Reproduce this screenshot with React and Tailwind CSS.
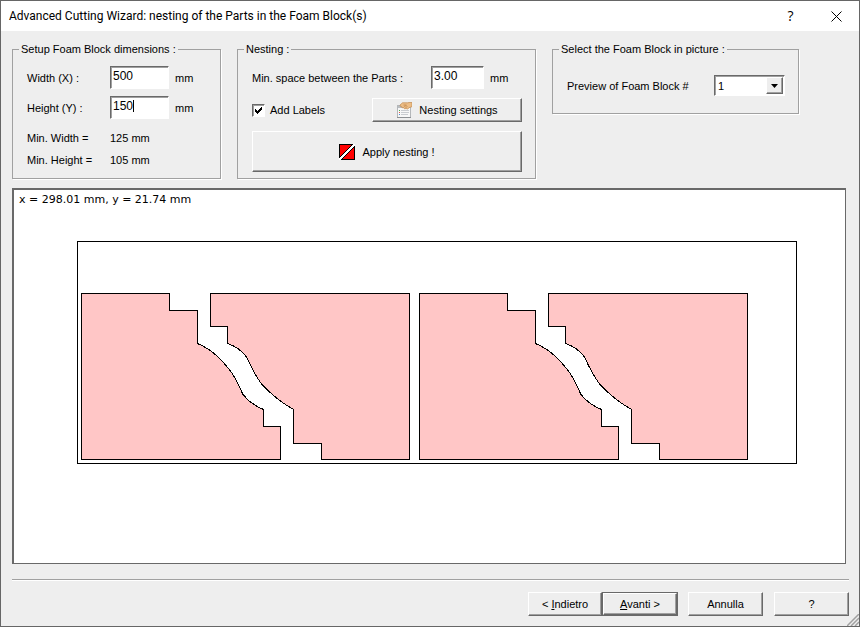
import React from "react";

const raised =
  "flex items-center justify-center border border-t-white border-l-white border-r-[#696969] border-b-[#696969] bg-[#eee] shadow-[inset_-1px_-1px_0_#a0a0a0]";
const sunken =
  "border border-t-[#696969] border-l-[#696969] border-r-white border-b-white bg-white shadow-[inset_1px_1px_0_#a0a0a0]";

function Group({ title, className, children }) {
  return (
    <fieldset
      className={
        "min-w-0 border border-[#a0a0a0] pr-[13px] pl-[14px] shadow-[1px_1px_0_#fff] " +
        className
      }
    >
      <legend className="-ml-2 bg-[#eee] px-[2px] leading-[14px]">{title}</legend>
      {children}
    </fieldset>
  );
}

function NumberField({ id, value, className, caret }) {
  return (
    <span className="relative flex">
      <input
        id={id}
        type="text"
        defaultValue={value}
        className={"h-[23px] px-[2px] pb-[3px] text-[12px] outline-none " + sunken + " " + className}
      />
      {caret && <span className="absolute top-1 left-[23px] h-3 w-px bg-black" />}
    </span>
  );
}

function SettingsIcon() {
  return (
    <svg width="16" height="16" viewBox="0 0 16 16" aria-hidden="true">
      <rect x="1.5" y="3.5" width="13" height="12" fill="#f7f7f7" stroke="#b4b7ba" />
      <path d="M2 4h12v2H2z" fill="#b9bdc1" />
      <path d="M1 15.5h14" stroke="#8e9194" />
      <path d="M3 8h1v1H3z" fill="#4caf50" />
      <path d="M3 10h1v1H3z" fill="#d9534f" />
      <path d="M3 12h1v1H3z" fill="#4a90d9" />
      <path d="M5 8.5h8M5 10.5h8M5 12.5h7" stroke="#c9ccd0" />
      <path
        d="M4 3 6.500 .8h5L13 .5h3v4.200l-2.500 .800-2 1.500-1.500-.5-1.500.4L7.500 5.500 6 5.800 5.600 4.600 4.300 4.300z"
        fill="#edbd85"
        stroke="#c08a50"
        strokeWidth="0.7"
      />
      <path d="M7.500 3h3M8 4.500l2.500-1M9.500 5.500l2-1" stroke="#b67a3e" strokeWidth="0.6" />
    </svg>
  );
}

function NestIcon() {
  return (
    <svg width="16" height="16" viewBox="0 0 16 16" aria-hidden="true" shapeRendering="crispEdges">
      <path d="M.5.5H14L.5 14zM15.500 15.500H2L15.500 2z" fill="#f00" stroke="#000" />
      <path d="M0 16 16 0" stroke="#fff" strokeWidth="2" />
    </svg>
  );
}

// one pair of parts, cut apart by the same wire path
function PartPair({ x }) {
  return (
    <g transform={`translate(${x} 0)`} fill="#ffc6c6" stroke="#000">
      <path d="M81.5 293.5H169.5V310.5H197.5V343.5C213 350 222 360 231.5 372.500C236 379 239 386 243 394.500C248 401 255 406 263.5 409.500V426.5H280.5V459.5H81.500Z" />
      <path d="M210.5 293.5H409.5V459.5H321.5V443.5H293.5V409.500C280 402 270 393 261.5 384C255 375 251 367 246.500 357C242 351 235 346 227.5 343.500V326.500H210.500Z" />
    </g>
  );
}

function App() {
  return (
    <div className="relative flex min-h-screen flex-col border border-[#666] bg-[#eee] font-['Liberation_Sans',sans-serif] text-[11px] leading-4 text-black">
      <header className="flex h-[30px] shrink-0 items-center bg-white pl-2">
        <h1 className="flex-1 font-['Roboto',sans-serif] text-[12px]">
          Advanced Cutting Wizard: nesting of the Parts in the Foam Block(s)
        </h1>
        <button className="h-full w-[45px] font-['Open_Sans',sans-serif] text-[14px]">
          ?
        </button>
        <button aria-label="Close" className="flex h-full w-[46px] items-center justify-center">
          <svg width="11" height="11" viewBox="0 0 11 11" aria-hidden="true">
            <path d="M.5.5l10 10M10.5.5l-10 10" stroke="#000" />
          </svg>
        </button>
      </header>

      <main className="flex flex-1 flex-col px-[11px] pt-[11px]">
        <div className="flex items-start gap-4">
          <Group title="Setup Foam Block dimensions :" className="w-[209px] pt-[10px] pb-[10px]">
            <div className="grid grid-cols-[83px_59px_1fr] items-center gap-y-[7px]">
              <label htmlFor="width">Width (X) :</label>
              <NumberField id="width" value="500" className="w-[59px]" />
              <span className="pl-[6px]">mm</span>
              <label htmlFor="height">Height (Y) :</label>
              <NumberField id="height" value="150" className="w-[59px]" caret />
              <span className="pl-[6px]">mm</span>
            </div>
            <dl className="mt-[11px] grid grid-cols-[83px_1fr] gap-y-[6px]">
              <dt>Min. Width =</dt>
              <dd>125 mm</dd>
              <dt>Min. Height =</dt>
              <dd>105 mm</dd>
            </dl>
          </Group>

          <Group title="Nesting :" className="w-[299px] pt-[10px] pb-[6px]">
            <div className="flex items-center">
              <label htmlFor="space" className="w-[179px]">
                Min. space between the Parts :
              </label>
              <NumberField id="space" value="3.00" className="w-[53px]" />
              <span className="pl-[6px]">mm</span>
            </div>
            <div className="mt-[9px] flex items-center justify-between">
              <label className="flex items-center gap-[5px]">
                <span className="grid">
                  <input
                    type="checkbox"
                    defaultChecked
                    className={"peer col-start-1 row-start-1 size-[13px] appearance-none " + sunken}
                  />
                  <svg
                    className="pointer-events-none invisible col-start-1 row-start-1 peer-checked:visible"
                    width="13"
                    height="13"
                    viewBox="0 0 13 13"
                    aria-hidden="true"
                  >
                    <path d="M3 5v3l2 2 5-5V2L5 7z" fill="#000" shapeRendering="crispEdges" />
                  </svg>
                </span>
                Add Labels
              </label>
              <button className={"h-6 w-[150px] gap-[7px] " + raised}>
                <SettingsIcon />
                Nesting settings
              </button>
            </div>
            <button className={"mt-[9px] h-[41px] w-full gap-[7px] " + raised}>
              <NestIcon />
              Apply nesting !
            </button>
          </Group>

          <Group title="Select the Foam Block in picture :" className="w-[247px] pt-[19px] pb-[17px]">
            <div className="flex items-center">
              <label htmlFor="block" className="w-[147px]">
                Preview of Foam Block #
              </label>
              <span className={"flex h-[21px] w-[71px] p-px " + sunken}>
                <select id="block" className="min-w-0 flex-1 appearance-none pl-[2px] outline-none">
                  <option>1</option>
                </select>
                <span className={"pointer-events-none w-[17px] " + raised}>
                  <svg width="7" height="4" viewBox="0 0 7 4" aria-hidden="true">
                    <path d="M0 0h7L3.5 4z" />
                  </svg>
                </span>
              </span>
            </div>
          </Group>
        </div>

        <section className="mt-[9px] mr-[2px] flex flex-1 flex-col border-t-2 border-r border-b border-l-2 border-[#696969] bg-white">
          <p className="h-[18px] pt-[2px] pl-[5px] font-['DejaVu_Sans',sans-serif] text-[11px]">
            x = 298.01 mm, y = 21.74 mm
          </p>
          <svg
            className="min-h-0 w-full flex-1"
            viewBox="14 208 831 355"
            shapeRendering="crispEdges"
            role="img"
            aria-label="Foam block preview"
          >
            <rect x="77.5" y="241.5" width="719" height="222" fill="#fff" stroke="#000" />
            <PartPair x={0} />
            <PartPair x={338} />
          </svg>
        </section>
      </main>

      <footer className="mr-[10px] ml-[11px] mt-[15px] flex items-center justify-end border-t border-[#a0a0a0] pt-3 pb-[10px] shadow-[inset_0_1px_0_#fff]">
        <button className={"h-6 w-[74px] " + raised}>
          <span>
            &lt; <u>I</u>ndietro
          </span>
        </button>
        <div className="border border-[#696969]">
          <button className={"h-[22px] w-[74px] " + raised}>
            <span>
              <u>A</u>vanti &gt;
            </span>
          </button>
        </div>
        <button className={"ml-[10px] h-6 w-[75px] " + raised}>Annulla</button>
        <button className={"ml-[11px] h-6 w-[75px] " + raised}>?</button>
      </footer>
      <svg
        className="absolute right-0 bottom-0"
        width="12"
        height="12"
        viewBox="0 0 12 12"
        aria-hidden="true"
      >
        <path d="M0 12 12 0M4 12l8-8M8 12l4-4" stroke="#a0a0a0" strokeWidth="1.5" />
      </svg>
    </div>
  );
}

export default App;
